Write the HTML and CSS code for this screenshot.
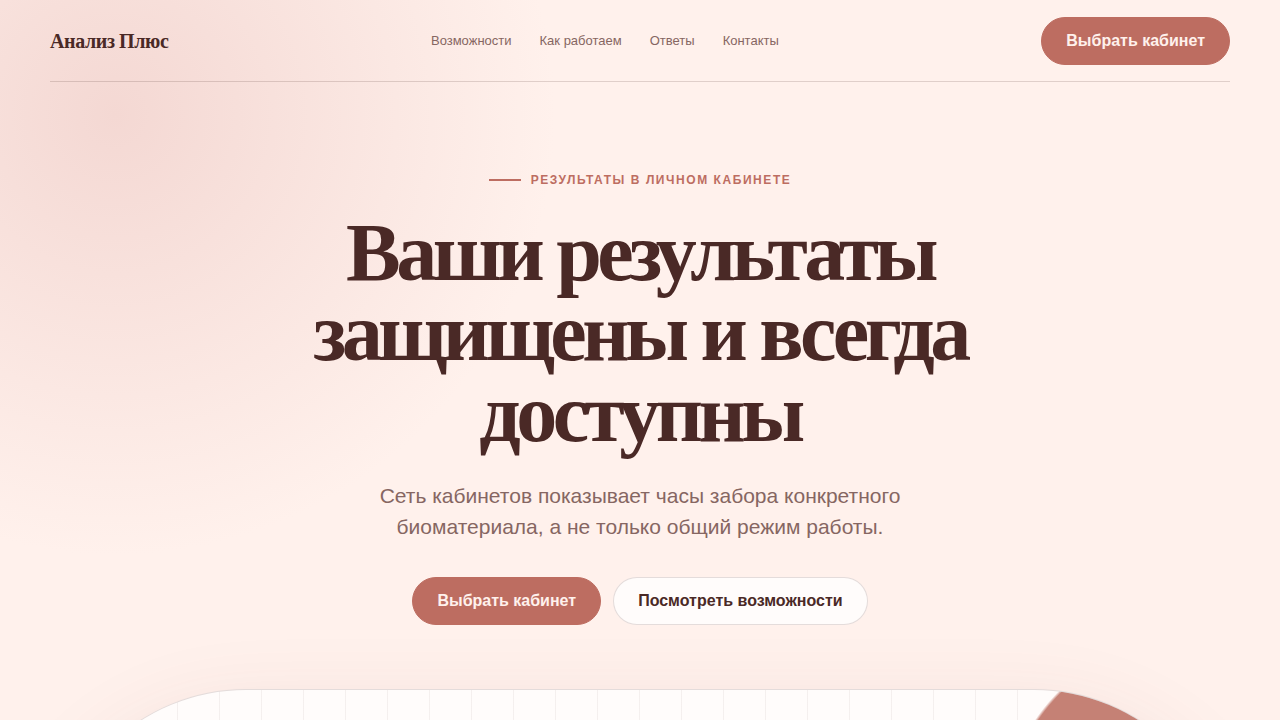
FILE: index.html
```html
<!DOCTYPE html>
<html lang="ru">
<head>
<meta charset="utf-8">
<meta name="viewport" content="width=device-width, initial-scale=1">
<title>Анализ Плюс</title>
<link rel="stylesheet" href="styles.css">
</head>
<body>
<div class="page">
  <header class="header">
    <a class="brand" href="#">Анализ Плюс</a>
    <nav class="nav">
      <a href="#features">Возможности</a>
      <a href="#how">Как работаем</a>
      <a href="#answers">Ответы</a>
      <a href="#contacts">Контакты</a>
    </nav>
    <button class="button button-primary" type="button">Выбрать кабинет</button>
  </header>
  <main class="hero">
    <p class="eyebrow">Результаты в личном кабинете</p>
    <h1 class="title">Ваши результаты защищены и всегда доступны</h1>
    <p class="lead">Сеть кабинетов показывает часы забора конкретного биоматериала, а не только общий режим работы.</p>
    <div class="actions">
      <button class="button button-primary" type="button">Выбрать кабинет</button>
      <button class="button button-secondary" type="button">Посмотреть возможности</button>
    </div>
    <div class="panel"></div>
  </main>
</div>
</body>
</html>
```
FILE: styles.css
```css
* { box-sizing: border-box; }

body {
  margin: 0;
  min-height: 100vh;
  background: radial-gradient(circle at 115px 115px, #f4d8d3, #fff1ec 440px) #fff1ec;
  color: #4a2926;
  font-family: "Liberation Sans", Arial, sans-serif;
  font-size: 16px;
}

html {
  height: 100%;
  overflow: hidden;
}

.page {
  width: calc(100% - 100px);
  margin: 0 auto;
}

.header {
  display: flex;
  align-items: center;
  justify-content: space-between;
  padding: 17px 0 16px;
  border-bottom: 1px solid rgba(74, 41, 38, 0.17);
}

.brand {
  color: inherit;
  font-family: "Liberation Serif", "Times New Roman", serif;
  font-size: 20px;
  font-weight: 700;
  letter-spacing: -0.02em;
  text-decoration: none;
}

.nav {
  display: flex;
  gap: 28px;
  line-height: 18px;
}

.nav a {
  color: #866662;
  font-size: 13px;
  text-decoration: none;
}

.button {
  height: 48px;
  padding: 0 24px;
  border: 1px solid transparent;
  border-radius: 24px;
  font: inherit;
  font-weight: 700;
  cursor: pointer;
}

.button-primary {
  background: #bd6d61;
  border-color: #bd6d61;
  color: #fff1ec;
}

.button-secondary {
  background: #fffcfb;
  border-color: rgba(74, 41, 38, 0.15);
  color: #4a2926;
}

.hero {
  display: flex;
  flex-direction: column;
  align-items: center;
  padding-top: 90px;
  text-align: center;
}

.eyebrow {
  display: flex;
  align-items: center;
  gap: 10px;
  margin: 0;
  color: #bd6d61;
  font-size: 12px;
  font-weight: 700;
  line-height: 16px;
  letter-spacing: 0.13em;
  text-transform: uppercase;
}

.eyebrow::before {
  content: "";
  width: 32px;
  height: 2px;
  background: currentColor;
}

.title {
  max-width: 760px;
  margin: 25px 0 0;
  font-family: "Liberation Serif", "Times New Roman", serif;
  font-size: 82px;
  font-weight: 700;
  line-height: 0.98;
  letter-spacing: -0.055em;
}

.lead {
  max-width: 580px;
  margin: 26px 0 0;
  color: #866662;
  font-size: 21px;
  line-height: 31px;
}

.actions {
  display: flex;
  gap: 12px;
  margin-top: 35px;
}

.panel {
  width: 100%;
  height: 480px;
  margin-top: 64px;
  border: 1px solid rgba(74, 41, 38, 0.15);
  border-radius: 196px;
  background:
    radial-gradient(circle at 1141px 135px, #c58175 186px, transparent 189px) padding-box,
    repeating-linear-gradient(90deg, rgba(74, 41, 38, 0.06) 0 1px, transparent 1px 42px) padding-box,
    #fffcfb;
  box-shadow: 0 30px 90px rgba(130, 60, 55, 0.12);
}
```
